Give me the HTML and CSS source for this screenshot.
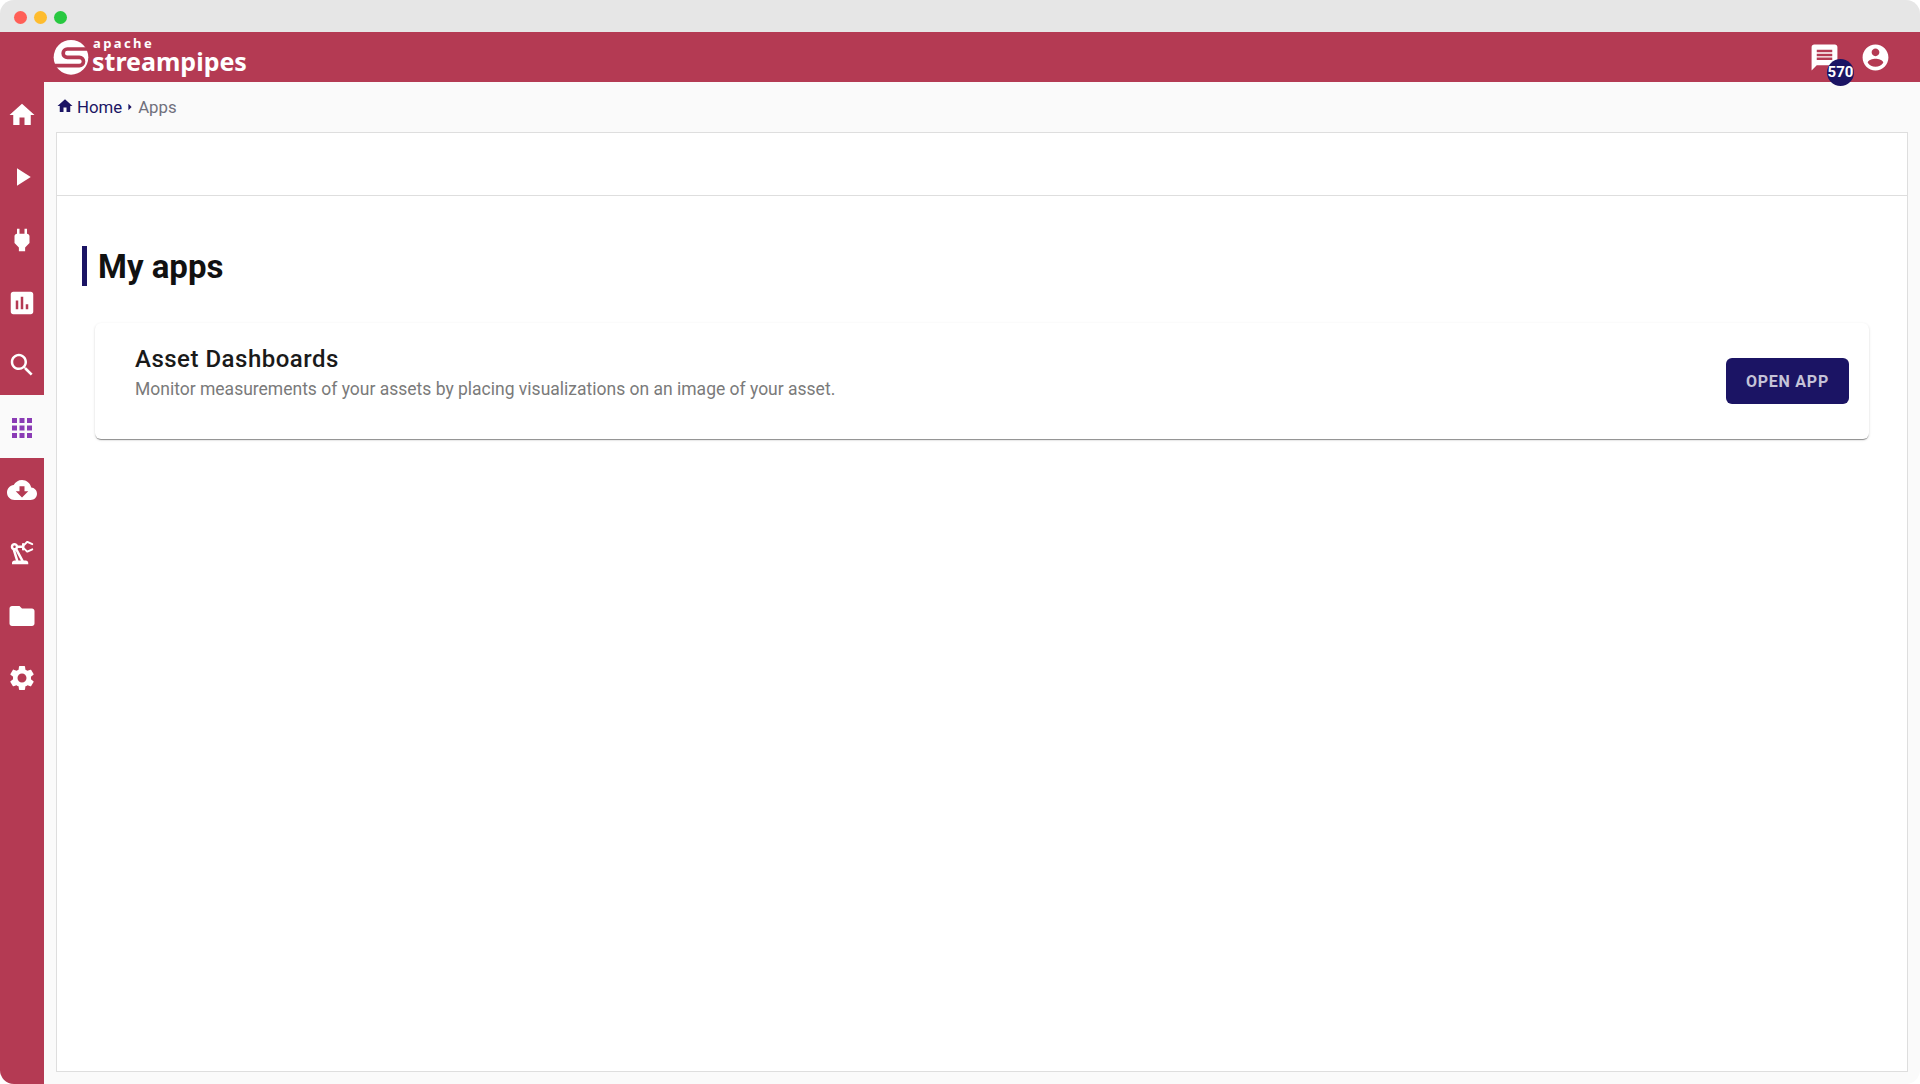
FILE: index.html
```html
<!DOCTYPE html>
<html lang="en">
<head>
<meta charset="utf-8">
<title>Apache StreamPipes - Apps</title>
<link rel="stylesheet" href="styles.css">
</head>
<body>
<div class="window">
  <div class="titlebar">
    <span class="light light-red"></span>
    <span class="light light-yellow"></span>
    <span class="light light-green"></span>
  </div>
  <header class="topbar">
    <div class="brand">
      <svg class="brand-mark" viewBox="0 0 132 138" aria-hidden="true">
        <circle class="mark-disc" cx="63" cy="70" r="52"/>
        <path class="mark-slot" d="M130 45H52A12.500 12.500 0 0 0 52 70H88A12.500 12.500 0 0 1 88 95H0"/>
      </svg>
      <div class="brand-text">
        <span class="brand-apache">apache</span>
        <span class="brand-name">streampipes</span>
      </div>
    </div>
    <div class="top-actions">
      <div class="notif">
        <svg class="top-icon" viewBox="0 0 24 24"><path d="M20 2H4c-1.100 0-1.990.9-1.990 2L2 22l4-4h14c1.100 0 2-.9 2-2V4c0-1.100-.9-2-2-2zm-2 12H6v-2h12v2zm0-3H6V9h12v2zm0-3H6V6h12v2z"/></svg>
        <span class="badge">570</span>
      </div>
      <svg class="top-icon" viewBox="0 0 24 24"><path d="M12 2C6.480 2 2 6.480 2 12s4.480 10 10 10 10-4.480 10-10S17.520 2 12 2zm0 3c1.660 0 3 1.340 3 3s-1.340 3-3 3-3-1.340-3-3 1.340-3 3-3zm0 14.200c-2.500 0-4.710-1.280-6-3.220.03-1.990 4-3.080 6-3.080 1.990 0 5.970 1.090 6 3.080-1.290 1.940-3.500 3.220-6 3.220z"/></svg>
    </div>
  </header>
  <div class="main">
    <nav class="sidebar">
      <a class="nav-item"><svg viewBox="0 0 24 24"><path d="M10 20v-6h4v6h5v-8h3L12 3 2 12h3v8z"/></svg></a>
      <a class="nav-item"><svg viewBox="0 0 24 24"><path d="M8 5v14l11-7z"/></svg></a>
      <a class="nav-item"><svg viewBox="0 0 24 24"><path d="M16.010 7L16 3h-2v4h-4V3H8v4h-.01C7 6.990 6 7.990 6 8.990v5.490L9.500 18v3h5v-3l3.500-3.510v-5.500c0-1-1-2-1.990-1.990z"/></svg></a>
      <a class="nav-item"><svg viewBox="0 0 24 24"><path d="M19 3H5c-1.100 0-2 .9-2 2v14c0 1.100.9 2 2 2h14c1.100 0 2-.9 2-2V5c0-1.100-.9-2-2-2zM9 17H7v-7h2v7zm4 0h-2V7h2v10zm4 0h-2v-4h2v4z"/></svg></a>
      <a class="nav-item"><svg viewBox="0 0 24 24"><path d="M15.500 14h-.79l-.28-.27C15.410 12.590 16 11.110 16 9.500 16 5.910 13.090 3 9.500 3S3 5.910 3 9.500 5.910 16 9.500 16c1.610 0 3.090-.59 4.230-1.570l.27.28v.79l5 4.990L20.490 19l-4.990-5zm-6 0C7.010 14 5 11.990 5 9.500S7.010 5 9.500 5 14 7.010 14 9.500 11.990 14 9.500 14z"/></svg></a>
      <a class="nav-item nav-item-active"><svg viewBox="0 0 24 24"><path d="M4 8h4V4H4v4zm6 12h4v-4h-4v4zm-6 0h4v-4H4v4zm0-6h4v-4H4v4zm6 0h4v-4h-4v4zm6-10v4h4V4h-4zm-6 4h4V4h-4v4zm6 6h4v-4h-4v4zm0 6h4v-4h-4v4z"/></svg></a>
      <a class="nav-item"><svg viewBox="0 0 24 24"><path d="M19.350 10.040C18.670 6.590 15.640 4 12 4 9.110 4 6.600 5.640 5.350 8.040 2.340 8.360 0 10.910 0 14c0 3.310 2.690 6 6 6h13c2.760 0 5-2.240 5-5 0-2.640-2.050-4.780-4.650-4.960zM17 13l-5 5-5-5h3V9h4v4h3z"/></svg></a>
      <a class="nav-item"><svg viewBox="0 0 24 24"><path d="M19.930,8.350l-3.600,1.680L14,7.700V6.300l2.330-2.330l3.600,1.680c0.380,0.180,0.820,0.010,1-0.360c0.180-0.380,0.010-0.820-0.360-1l-3.920-1.830 c-0.380-0.180-0.830-0.100-1.130,0.200L13.780,4.400C13.600,4.160,13.320,4,13,4c-0.550,0-1,0.450-1,1v1H8.820C8.400,4.840,7.300,4,6,4C4.340,4,3,5.340,3,7 c0,1.100,0.600,2.050,1.480,2.580L7.080,18H6c-1.100,0-2,0.900-2,2v1h13v-1c0-1.100-0.900-2-2-2h-1.620L8.410,8.770C8.580,8.530,8.720,8.280,8.820,8H12v1 c0,0.550,0.450,1,1,1c0.320,0,0.600-0.160,0.780-0.400l1.740,1.740c0.300,0.300,0.750,0.380,1.130,0.200l3.920-1.830c0.380-0.180,0.540-0.620,0.360-1 C20.750,8.340,20.310,8.170,19.930,8.350z M6,8C5.450,8,5,7.550,5,7c0-0.550,0.450-1,1-1s1,0.450,1,1C7,7.550,6.550,8,6,8z M11.110,18H9.170 l-2.460-8h0.100L11.110,18z"/></svg></a>
      <a class="nav-item"><svg viewBox="0 0 24 24"><path d="M10 4H4c-1.100 0-1.990.9-1.990 2L2 18c0 1.100.9 2 2 2h16c1.100 0 2-.9 2-2V8c0-1.100-.9-2-2-2h-8l-2-2z"/></svg></a>
      <a class="nav-item"><svg viewBox="0 0 24 24"><path d="M19.140 12.940c.04-.3.06-.61.06-.94 0-.32-.02-.64-.07-.94l2.030-1.580c.18-.14.230-.41.120-.61l-1.920-3.320c-.12-.22-.37-.29-.59-.22l-2.390.96c-.5-.38-1.030-.7-1.620-.94l-.36-2.540c-.04-.24-.24-.41-.48-.41h-3.840c-.24 0-.43.17-.47.41l-.36 2.540c-.59.24-1.130.57-1.620.94l-2.390-.96c-.22-.08-.47 0-.59.22L2.740 8.870c-.12.21-.08.47.12.61l2.030 1.580c-.05.3-.09.63-.09.94s.02.64.07.94l-2.030 1.580c-.18.14-.23.41-.12.61l1.920 3.320c.12.22.37.29.59.22l2.390-.96c.5.38 1.030.7 1.620.94l.36 2.540c.05.24.24.41.48.41h3.840c.24 0 .44-.17.47-.41l.36-2.540c.59-.24 1.130-.56 1.620-.94l2.390.96c.22.08.47 0 .59-.22l1.920-3.320c.12-.22.07-.47-.12-.61l-2.010-1.580zM12 15.600c-1.980 0-3.600-1.620-3.600-3.600s1.620-3.600 3.600-3.600 3.600 1.620 3.600 3.600-1.620 3.600-3.600 3.600z"/></svg></a>
    </nav>
    <div class="content">
      <div class="breadcrumb">
        <svg class="crumb-home" viewBox="0 0 24 24"><path d="M10 20v-6h4v6h5v-8h3L12 3 2 12h3v8z"/></svg>
        <a class="crumb-link">Home</a>
        <svg class="crumb-sep" viewBox="0 0 6 10"><path d="M1 1l4 4-4 4z"/></svg>
        <span class="crumb-current">Apps</span>
      </div>
      <section class="panel">
        <div class="panel-toolbar"></div>
        <div class="panel-body">
          <h1 class="page-title">My apps</h1>
          <article class="app-card">
            <div class="app-info">
              <h2 class="app-name">Asset Dashboards</h2>
              <p class="app-desc">Monitor measurements of your assets by placing visualizations on an image of your asset.</p>
            </div>
            <button class="open-btn">OPEN APP</button>
          </article>
        </div>
      </section>
    </div>
  </div>
</div>
</body>
</html>
```
FILE: styles.css
```css
* { box-sizing: border-box; }
html, body { margin: 0; height: 100%; background: #fff; }
body { font-family: Roboto, "Liberation Sans", sans-serif; overflow: hidden; }

.window {
  width: 1920px;
  height: 1084px;
  display: flex;
  flex-direction: column;
  background: #fafafa;
  border-radius: 14px;
  overflow: hidden;
}

.titlebar {
  height: 32px;
  flex: none;
  display: flex;
  align-items: center;
  gap: 7px;
  padding: 2px 0 0 13.500px;
  background: #e6e6e6;
}
.light { width: 13px; height: 13px; border-radius: 50%; }
.light-red { background: #ff5f57; }
.light-yellow { background: #febc2e; }
.light-green { background: #28c840; }

.topbar {
  height: 50px;
  flex: none;
  display: flex;
  align-items: center;
  justify-content: space-between;
  padding: 0 29px 0 50px;
  background: #b43a53;
}
.brand { display: flex; align-items: center; height: 50px; color: #fff; }
.brand-mark { width: 44px; height: 46px; margin-right: -2px; }
.mark-disc { fill: #fff; }
.mark-slot { fill: none; stroke: #b43a53; stroke-width: 11; }
.brand-text { display: flex; flex-direction: column; font-family: "Noto Sans", sans-serif; font-weight: 700; margin-top: -4px; }
.brand-apache { font-size: 13px; line-height: 12px; letter-spacing: 2.400px; margin-left: 1px; }
.brand-name { font-size: 25px; line-height: 24px; }

.top-actions { display: flex; align-items: center; gap: 20px; margin-top: 1px; }
.top-icon { width: 31px; height: 31px; fill: #fff; display: block; }
.notif { position: relative; }
.badge {
  position: absolute;
  left: 18px;
  top: 17px;
  width: 27px;
  height: 27px;
  border-radius: 50%;
  background: #1b1464;
  color: #fff;
  font-size: 15px;
  font-weight: 700;
  line-height: 27px;
  text-align: center;
}

.main { flex: 1; display: flex; min-height: 0; }

.sidebar { width: 44px; flex: none; background: #b43a53; }
.nav-item { height: 62.6px; padding-top: 3px; display: flex; align-items: center; justify-content: center; }
.nav-item svg { width: 30px; height: 30px; fill: #fff; }
.nav-item-active { background: #fafafa; }
.nav-item-active svg { fill: #8a3bb5; }

.content { flex: 1; display: flex; flex-direction: column; min-width: 0; padding: 0 12px 12px 12px; }

.breadcrumb { height: 50px; flex: none; display: flex; align-items: center; font-size: 16.800px; }
.crumb-home { width: 18px; height: 18px; fill: #1b1464; margin: -2px 3px 0 0; }
.crumb-link { color: #1b1464; }
.crumb-sep { width: 6px; height: 8px; fill: #1b1464; margin: -1px 5px 0 5px; }
.crumb-current { color: #70707c; }

.panel { flex: 1; display: flex; flex-direction: column; background: #fff; border: 1px solid #dedede; }
.panel-toolbar { height: 63px; flex: none; border-bottom: 1px solid #dedede; }
.panel-body { padding: 50px 38px 0 25px; }

.page-title {
  margin: 0;
  height: 40px;
  border-left: 5px solid #1b1464;
  padding-left: 11px;
  font-size: 33px;
  font-weight: 700;
  line-height: 42px;
  color: #111;
}

.app-card {
  margin: 37px 0 0 13px;
  height: 116px;
  display: flex;
  align-items: center;
  justify-content: space-between;
  padding: 0 20px 0 40px;
  background: #fff;
  border-radius: 6px;
  box-shadow: 0 2px 1px -1px rgba(0, 0, 0, 0.3), 0 1px 1px 0 rgba(0, 0, 0, 0.14), 0 1px 3px 0 rgba(0, 0, 0, 0.12);
}
.app-info { margin-top: -18px; }
.app-name { margin: 0 0 2px; font-size: 24px; font-weight: 500; line-height: 31px; letter-spacing: 0.5px; color: #1a1a1a; }
.app-desc { margin: 0; font-size: 17.500px; line-height: 24px; color: #7a7a7a; font-weight: 400; }

.open-btn {
  width: 123px;
  height: 46px;
  margin-top: -1px;
  padding: 1px 0 0;
  border: 0;
  border-radius: 6px;
  background: #1b1464;
  color: #c5c3d8;
  font-family: inherit;
  font-size: 16px;
  font-weight: 700;
  letter-spacing: 0.75px;
}
```
